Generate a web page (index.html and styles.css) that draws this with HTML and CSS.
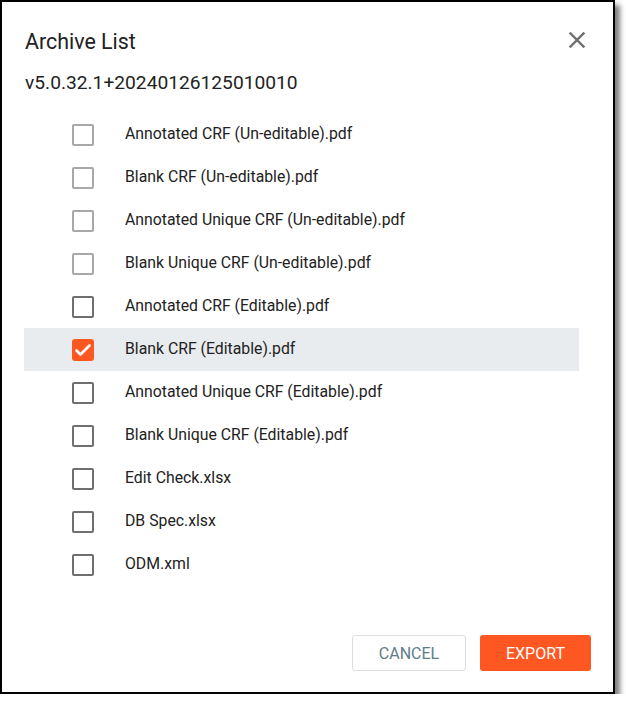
FILE: index.html
```html
<!DOCTYPE html>
<html lang="en">
<head>
<meta charset="utf-8">
<title>Archive List</title>
<link rel="stylesheet" href="styles.css">
</head>
<body>
<div class="dialog">
  <div class="header">
    <h1 class="title">Archive List</h1>
    <button class="close" aria-label="Close">
      <svg viewBox="0 0 24 24" width="28" height="28"><path d="M19 6.41 17.59 5 12 10.59 6.41 5 5 6.41 10.59 12 5 17.59 6.41 19 12 13.41 17.59 19 19 17.59 13.41 12z" fill="#707070"/></svg>
    </button>
  </div>
  <div class="version">v5.0.32.1+20240126125010010</div>
  <ul class="list">
    <li class="row"><span class="box light"></span><span class="label">Annotated CRF (Un-editable).pdf</span></li>
    <li class="row"><span class="box light"></span><span class="label">Blank CRF (Un-editable).pdf</span></li>
    <li class="row"><span class="box light"></span><span class="label">Annotated Unique CRF (Un-editable).pdf</span></li>
    <li class="row"><span class="box light"></span><span class="label">Blank Unique CRF (Un-editable).pdf</span></li>
    <li class="row"><span class="box"></span><span class="label">Annotated CRF (Editable).pdf</span></li>
    <li class="row selected"><span class="box checked"><svg viewBox="0 0 22 22" width="22" height="22"><polyline points="4.5,11.5 8.5,15.5 17.5,6.5" fill="none" stroke="#fff" stroke-width="2.6" stroke-linecap="round" stroke-linejoin="round"/></svg></span><span class="label">Blank CRF (Editable).pdf</span></li>
    <li class="row"><span class="box"></span><span class="label">Annotated Unique CRF (Editable).pdf</span></li>
    <li class="row"><span class="box"></span><span class="label">Blank Unique CRF (Editable).pdf</span></li>
    <li class="row"><span class="box"></span><span class="label">Edit Check.xlsx</span></li>
    <li class="row"><span class="box"></span><span class="label">DB Spec.xlsx</span></li>
    <li class="row"><span class="box"></span><span class="label">ODM.xml</span></li>
  </ul>
  <div class="footer">
    <button class="btn cancel">CANCEL</button>
    <button class="btn export">EXPORT</button>
  </div>
</div>
</body>
</html>
```
FILE: styles.css
```css
html, body {
  margin: 0;
  padding: 0;
  background: #fff;
}
body {
  font-family: Roboto, "Liberation Sans", Arial, sans-serif;
  color: #222;
}
.dialog {
  box-sizing: border-box;
  width: 615px;
  height: 694px;
  border: 2px solid #000;
  background: #fff;
  box-shadow: 5px 5px 5px rgba(0, 0, 0, 0.5);
  display: flex;
  flex-direction: column;
  padding-top: 26px;
}
.header {
  display: flex;
  align-items: flex-start;
  justify-content: space-between;
  padding: 0 22px 0 23px;
}
.title {
  margin: 0;
  font-size: 21.4px;
  font-weight: 400;
  line-height: 28px;
  color: #222;
}
.close {
  margin-top: -2px;
  padding: 0;
  border: 0;
  background: none;
  width: 28px;
  height: 28px;
  display: flex;
}
.version {
  margin-top: 13px;
  padding-left: 23px;
  font-size: 19.2px;
  line-height: 28px;
  color: #222;
}
.list {
  list-style: none;
  margin: 16px 34px 0 22px;
  padding: 0;
}
.row {
  height: 43px;
  display: flex;
  align-items: center;
  padding-left: 48px;
}
.row.selected {
  background: #e9ecef;
}
.box {
  box-sizing: border-box;
  width: 22px;
  height: 22px;
  border: 2px solid #6f6f6f;
  border-radius: 2px;
  flex: none;
  display: flex;
}
.box.light {
  border-color: #a8a8a8;
}
.box.checked {
  border: 0;
  border-radius: 3px;
  background: #ff5722;
}
.label {
  margin-left: 31px;
  margin-top: -3px;
  font-size: 15.8px;
  color: #222;
}
.footer {
  margin-top: auto;
  display: flex;
  justify-content: flex-end;
  gap: 14px;
  padding: 0 22px 21px 0;
}
.btn {
  box-sizing: border-box;
  height: 36px;
  padding: 0 25px;
  font-family: Roboto, "Liberation Sans", Arial, sans-serif;
  font-size: 16px;
  border-radius: 3px;
}
.cancel {
  width: 114px;
  background: #fff;
  border: 1px solid #dcdfe2;
  color: #607d8b;
}
.export {
  width: 111px;
  background: #ff5722;
  border: 0;
  color: #fff;
}
```
